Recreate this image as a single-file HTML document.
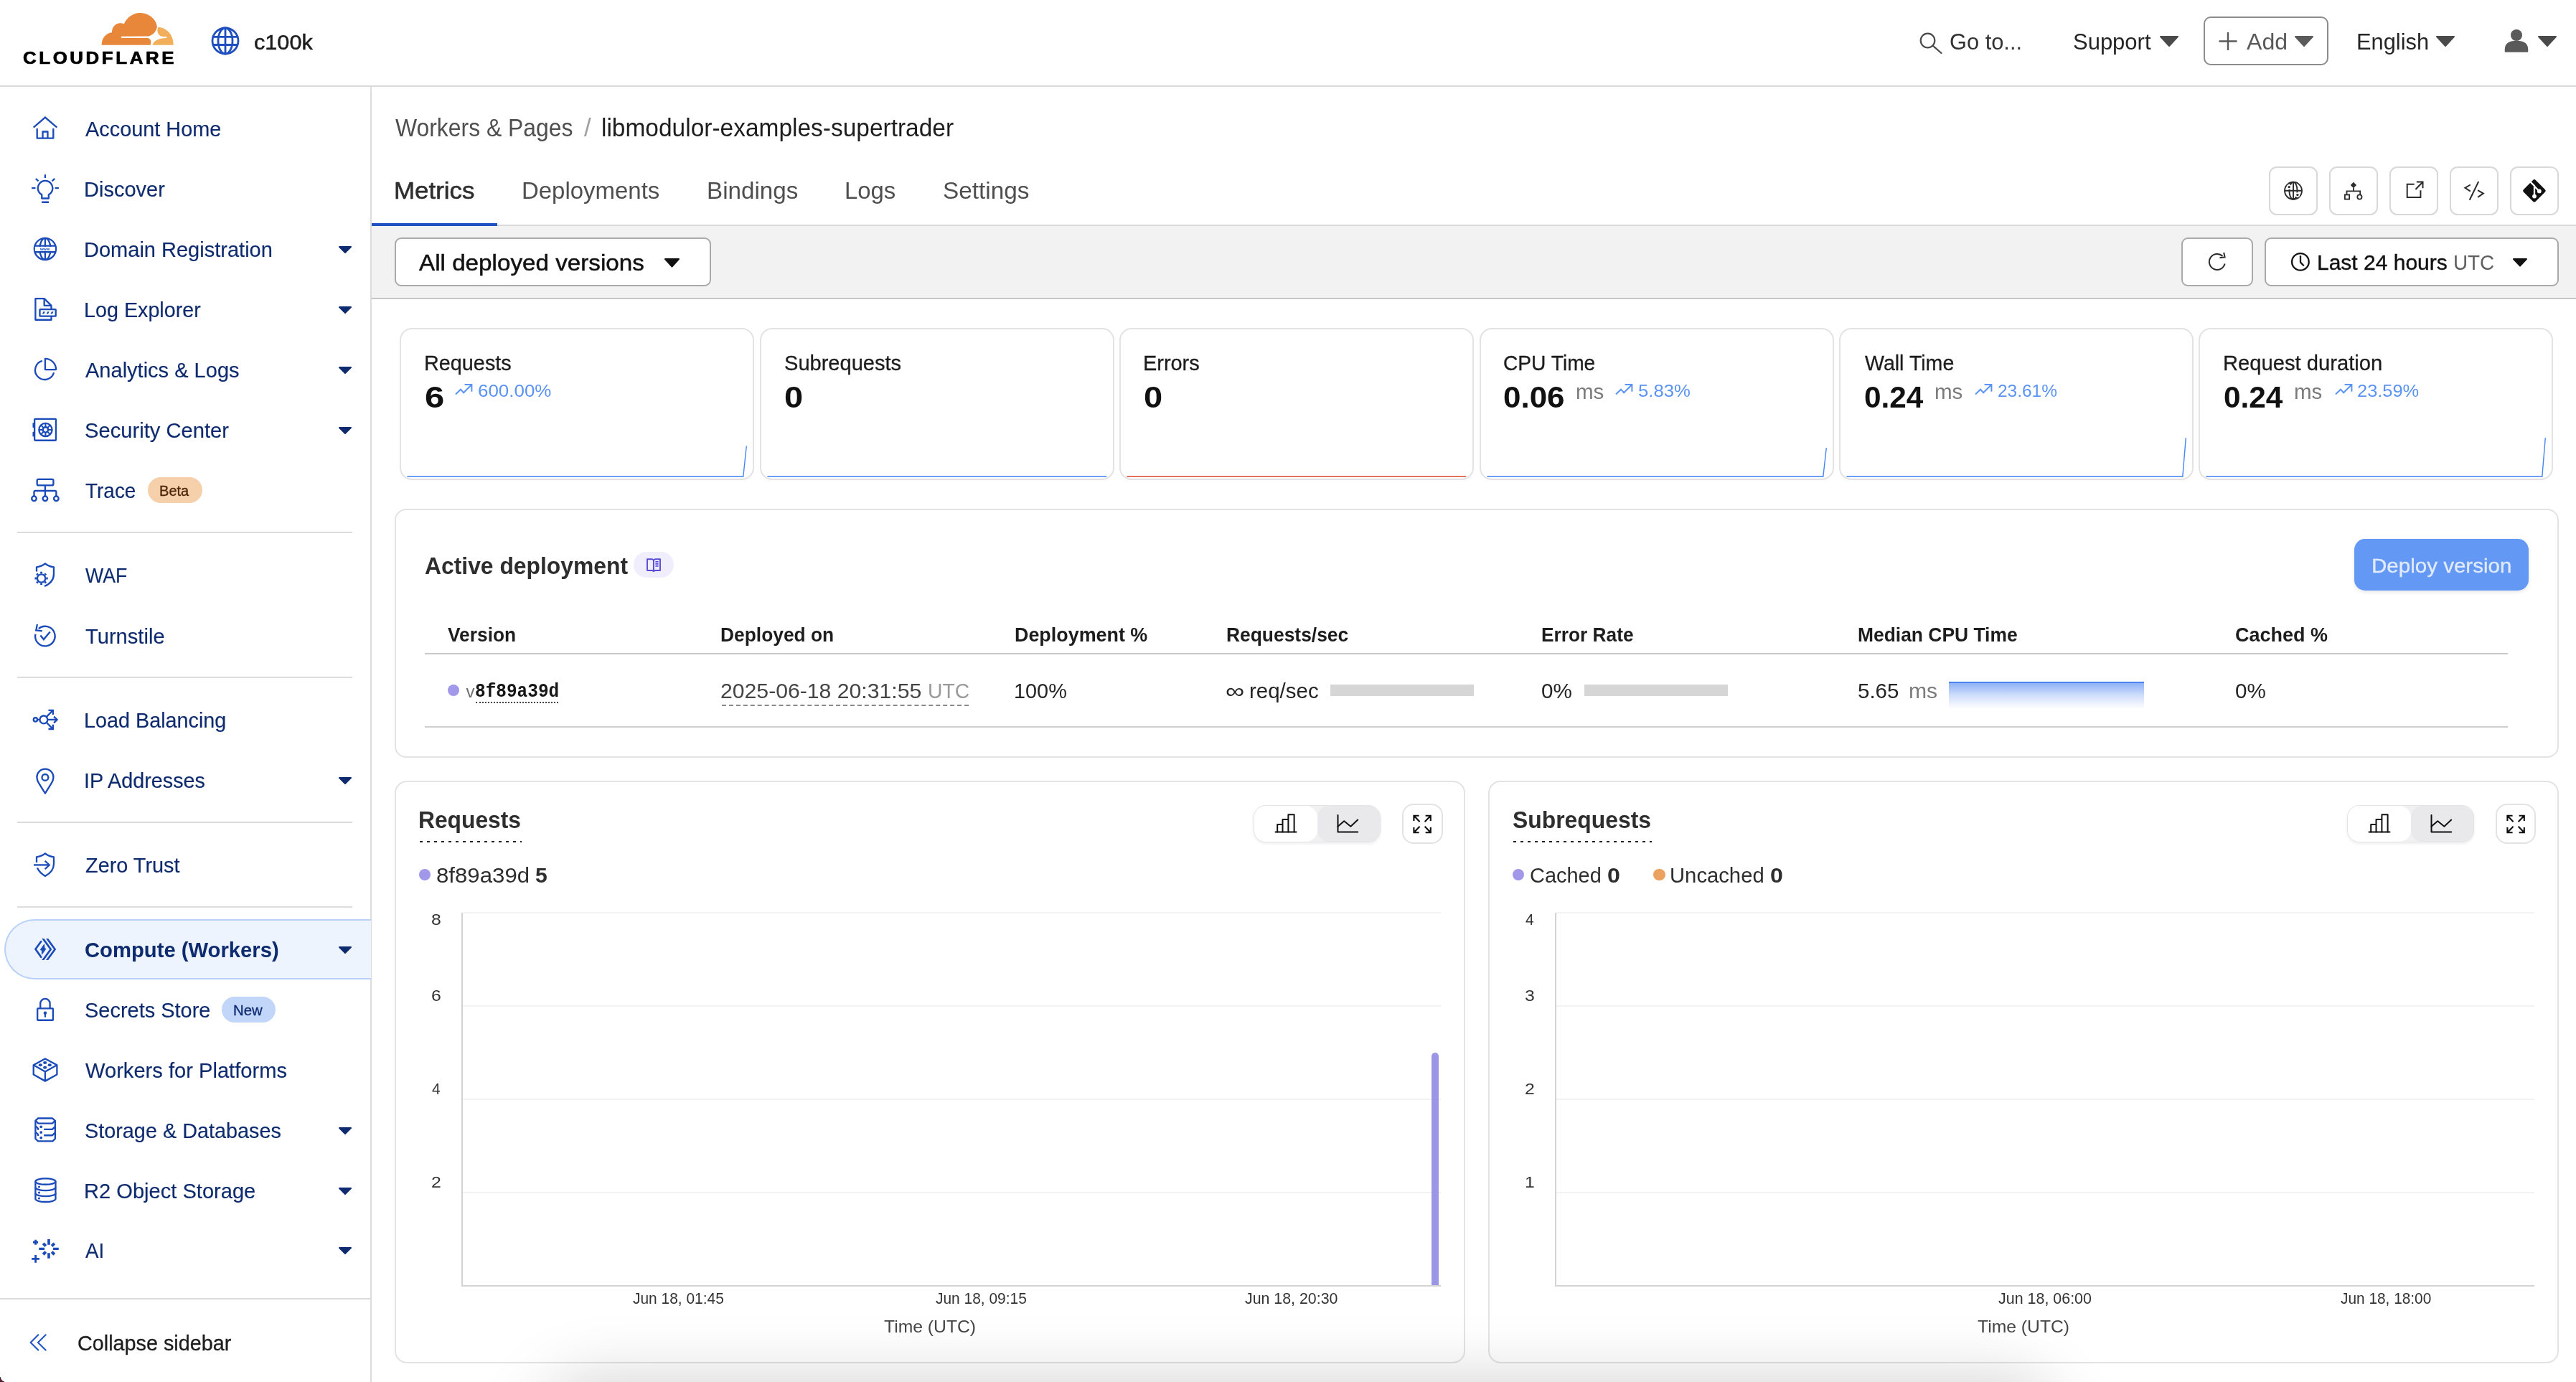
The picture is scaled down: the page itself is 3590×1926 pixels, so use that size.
<!DOCTYPE html>
<html><head><meta charset="utf-8"><title>Workers &amp; Pages</title><style>
html,body{margin:0;padding:0;background:#fff}
body{width:3590px;height:1926px;overflow:hidden;position:relative;font-family:"Liberation Sans",sans-serif}
#root{position:absolute;left:0;top:0;width:3590px;height:1926px;overflow:hidden;will-change:transform}
.a{position:absolute;display:block}
.t{position:absolute;display:block;white-space:pre;line-height:1;transform-origin:0 0;font-family:"Liberation Sans",sans-serif}
</style></head>
<body><div id="root">
<div class="a" style="left:0px;top:119px;width:3590px;height:2px;background:#dadada"></div>
<svg class="a" style="left:20px;top:5px" width="240" height="100" viewBox="0 0 2576 1073" ><path d="M1305,620 C1305,520 1370,440 1460,432 C1455,350 1520,292 1580,292 C1605,292 1625,298 1640,305 C1680,215 1770,140 1875,140 C2010,140 2120,230 2135,345 C2125,405 2085,465 2010,488 L1600,490 L1600,515 L1990,515 C2040,520 2055,570 2035,620 Z" fill="#e8863a"/><path d="M2150,355 C2270,355 2380,460 2380,620 L2065,620 C2085,555 2150,520 2275,515 L2285,495 L2200,490 C2150,475 2125,420 2150,355 Z" fill="#f2ae5a"/></svg>
<span class="t" id="t0" style="left:32.00px;top:70px;font-size:23px;color:#000;font-weight:700;-webkit-text-stroke:0.7px #000;letter-spacing:3.2px;transform:scaleX(1.1237);">CLOUDFLARE</span>
<svg class="a" style="left:284px;top:27px" width="60" height="60" viewBox="0 0 60 60" ><g fill="none" stroke="#1f4fbf" stroke-width="2.8"><circle cx="30" cy="30" r="18"/><ellipse cx="30" cy="30" rx="10" ry="18"/><path d="M30,12 V48 M13,24.4 H47 M13,35.5 H47"/></g></svg>
<span class="t" id="t1" style="left:353.96px;top:44px;font-size:29.5px;color:#1d1d1d;-webkit-text-stroke:0.5px #1d1d1d;transform:scaleX(1.0389);">c100k</span>
<svg class="a" style="left:2670px;top:40px" width="44" height="40" viewBox="0 0 44 40" ><g fill="none" stroke="#4a4a4a" stroke-width="2.2"><circle cx="16.5" cy="16.5" r="9.8"/><path d="M23.6,23.6 L35.5,34" stroke-linecap="round"/></g></svg>
<span class="t" id="t2" style="left:2716.99px;top:43px;font-size:30.5px;color:#333;transform:scaleX(1.0099);">Go to...</span>
<span class="t" id="t3" style="left:2888.98px;top:43px;font-size:30.5px;color:#252525;transform:scaleX(1.0155);">Support</span>
<svg class="a" style="left:3010px;top:49.5px" width="26" height="15" viewBox="0 0 26 15" ><path d="M1,1 H25 L13.0,14 Z" fill="#4a4a4a" stroke="#4a4a4a" stroke-width="2" stroke-linejoin="round"/></svg>
<div class="a" style="left:3070.6px;top:22.6px;width:174.6px;height:68.6px;border:2px solid #8c8c8c;border-radius:10px;box-sizing:border-box"></div>
<svg class="a" style="left:3090px;top:42px" width="30" height="30" viewBox="0 0 30 30" ><path d="M15,3 V28 M2.5,15.5 H27.5" stroke="#595959" stroke-width="2.4" fill="none"/></svg>
<span class="t" id="t4" style="left:3131.00px;top:43px;font-size:30.5px;color:#595959;transform:scaleX(1.0515);">Add</span>
<svg class="a" style="left:3198px;top:49.5px" width="26" height="15" viewBox="0 0 26 15" ><path d="M1,1 H25 L13.0,14 Z" fill="#5a5a5a" stroke="#5a5a5a" stroke-width="2" stroke-linejoin="round"/></svg>
<span class="t" id="t5" style="left:3283.98px;top:43px;font-size:30.5px;color:#252525;transform:scaleX(1.0098);">English</span>
<svg class="a" style="left:3395px;top:49.5px" width="26" height="15" viewBox="0 0 26 15" ><path d="M1,1 H25 L13.0,14 Z" fill="#4a4a4a" stroke="#4a4a4a" stroke-width="2" stroke-linejoin="round"/></svg>
<svg class="a" style="left:3488px;top:38px" width="38" height="38" viewBox="0 0 38 38" ><g fill="#5a5a5a"><circle cx="19" cy="11" r="8"/><path d="M3.5,34 V31 C3.5,23 10,19.5 19,19.5 C28,19.5 34.5,23 34.5,31 V34 Z" stroke="#5a5a5a" stroke-width="1.5" stroke-linejoin="round"/></g></svg>
<svg class="a" style="left:3537px;top:49.5px" width="26" height="15" viewBox="0 0 26 15" ><path d="M1,1 H25 L13.0,14 Z" fill="#4a4a4a" stroke="#4a4a4a" stroke-width="2" stroke-linejoin="round"/></svg>
<div class="a" style="left:516px;top:121px;width:2px;height:1805px;background:#dcdcdc"></div>
<div class="a" style="left:6px;top:1281px;width:511px;height:84px;background:#edf4fe;border:2px solid #b9d1f8;border-right:none;border-radius:42px 0 0 42px;box-sizing:border-box"></div>
<svg class="a" style="left:30px;top:150px" width="70" height="70" viewBox="0 0 1382 1382" fill="none" stroke="#1b4bb9" stroke-width="46"><polyline points="330,545 650,268 975,545"/><path d="M428,575 V840 H875 V575" stroke-linejoin="round"/><path d="M583,840 V662 H720 V840" stroke-linejoin="round"/></svg>
<svg class="a" style="left:30px;top:230px" width="70" height="70" viewBox="0 0 1382 1382" fill="none" stroke="#1b4bb9" stroke-width="46"><path d="M558,816 A203,203 0 1 1 747,816 V918 H558 Z" stroke-linejoin="round"/><path d="M555,1022 H750 M650,260 V355 M280,635 H385 M920,635 H1025 M390,375 L465,442 M912,372 L840,445"/></svg>
<svg class="a" style="left:30px;top:314px" width="70" height="70" viewBox="0 0 1382 1382" fill="none" stroke="#1b4bb9" stroke-width="46"><circle cx="650" cy="650" r="298"/><path d="M650,352 V948"/><ellipse cx="650" cy="650" rx="150" ry="298"/><rect x="372" y="588" width="556" height="124" fill="#fff" stroke="none"/><path d="M364,565 H936 M364,735 H936"/><text x="655" y="688" font-family="Liberation Sans" font-size="112" font-weight="700" text-anchor="middle" fill="#1b4bb9" stroke="none">www.</text></svg>
<svg class="a" style="left:30px;top:398px" width="70" height="70" viewBox="0 0 1382 1382" fill="none" stroke="#1b4bb9" stroke-width="46"><path d="M383,358 H625 L819,550 V942 H383 Z" stroke-linejoin="round"/><path d="M625,358 V550 H819" stroke-linejoin="round"/><rect x="503" y="653" width="439" height="189" rx="14" fill="#fff"/><path d="M600,715 H648 L618,782 H570 Z" fill="#1b4bb9" stroke="none"/><path d="M715,715 H763 L733,782 H685 Z" fill="#1b4bb9" stroke="none"/><path d="M830,715 H878 L848,782 H800 Z" fill="#1b4bb9" stroke="none"/></svg>
<svg class="a" style="left:30px;top:482px" width="70" height="70" viewBox="0 0 1382 1382" fill="none" stroke="#1b4bb9" stroke-width="46"><path d="M570,412 A262,262 0 1 0 890,735"/><path d="M650,352 V653 H948 A298,298 0 0 0 650,352 Z" stroke-linejoin="round"/></svg>
<svg class="a" style="left:30px;top:566px" width="70" height="70" viewBox="0 0 1382 1382" fill="none" stroke="#1b4bb9" stroke-width="46"><rect x="358" y="353" width="589" height="589" rx="18"/><path d="M325,480 V575 M325,725 V820" stroke-width="40" stroke-linecap="round"/><circle cx="660" cy="650" r="180"/><circle cx="660" cy="650" r="72"/><path d="M732.0,650.0 L840.0,650.0 M710.9,700.9 L787.3,777.3 M660.0,722.0 L660.0,830.0 M609.1,700.9 L532.7,777.3 M588.0,650.0 L480.0,650.0 M609.1,599.1 L532.7,522.7 M660.0,578.0 L660.0,470.0 M710.9,599.1 L787.3,522.7 " stroke-width="40"/></svg>
<svg class="a" style="left:30px;top:650px" width="70" height="70" viewBox="0 0 1382 1382" fill="none" stroke="#1b4bb9" stroke-width="46"><rect x="428" y="353" width="449" height="169" rx="38"/><path d="M650,522 V815"/><path d="M345,815 V708 Q345,672 381,672 H919 Q955,672 955,708 V815"/><circle cx="345" cy="885" r="65"/><circle cx="650" cy="885" r="65"/><circle cx="955" cy="885" r="65"/></svg>
<svg class="a" style="left:30px;top:768px" width="70" height="70" viewBox="0 0 1382 1382" fill="none" stroke="#1b4bb9" stroke-width="46"><path d="M415,565 V440 C505,428 590,392 650,345 C710,392 795,428 888,440 V630 C888,775 790,900 630,968" stroke-linejoin="round"/><circle cx="545" cy="750" r="112"/><path d="M677.0,750.0 L725.0,750.0 M638.3,843.3 L672.3,877.3 M545.0,882.0 L545.0,930.0 M451.7,843.3 L417.7,877.3 M413.0,750.0 L365.0,750.0 M451.7,656.7 L417.7,622.7 M545.0,618.0 L545.0,570.0 M638.3,656.7 L672.3,622.7 " stroke-width="58"/></svg>
<svg class="a" style="left:30px;top:852px" width="70" height="70" viewBox="0 0 1382 1382" fill="none" stroke="#1b4bb9" stroke-width="46"><path d="M383,625 A272,272 0 1 0 470,478"/><path d="M432,358 L400,522 L570,542"/><path d="M520,662 L610,772 L785,565"/></svg>
<svg class="a" style="left:30px;top:970px" width="70" height="70" viewBox="0 0 1382 1382" fill="none" stroke="#1b4bb9" stroke-width="46"><circle cx="383" cy="650" r="52"/><circle cx="610" cy="650" r="107"/><path d="M435,650 H503"/><path d="M717,650 H985"/><path d="M890,565 L978,650 L890,738"/><path d="M690,570 L860,395"/><path d="M740,392 H865 V515"/><path d="M690,730 L860,905"/><path d="M740,908 H865 V785"/></svg>
<svg class="a" style="left:30px;top:1054px" width="70" height="70" viewBox="0 0 1382 1382" fill="none" stroke="#1b4bb9" stroke-width="46"><path d="M650,1018 L478,745 C440,685 422,635 422,575 A228,228 0 0 1 878,575 C878,635 860,685 822,745 Z" stroke-linejoin="round"/><circle cx="650" cy="580" r="87"/></svg>
<svg class="a" style="left:30px;top:1172px" width="70" height="70" viewBox="0 0 1382 1382" fill="none" stroke="#1b4bb9" stroke-width="46"><path d="M415,590 V440 C505,428 590,392 650,345 C710,392 795,428 888,440 V630 C888,775 790,890 650,965 C560,915 480,840 432,742" stroke-linejoin="round"/><path d="M335,660 H770"/><path d="M645,548 L765,660 L645,775"/></svg>
<svg class="a" style="left:30px;top:1290px" width="70" height="70" viewBox="0 0 1382 1382" fill="none" stroke="#1b4bb9" stroke-width="52"><defs><clipPath id="cc"><rect x="0" y="353" width="1382" height="594"/></clipPath></defs><path d="M538,435 L385,645 L538,865" stroke-linecap="round"/><g clip-path="url(#cc)"><path d="M570,328 L805,650 L570,972"/><path d="M685,328 L920,650 L685,972"/></g><path d="M623,510 L517,664 L559,681 L561,794 L672,638 L636,621 Z" fill="#1b4bb9" stroke="#1b4bb9" stroke-width="14" stroke-linejoin="round"/></svg>
<svg class="a" style="left:30px;top:1374px" width="70" height="70" viewBox="0 0 1382 1382" fill="none" stroke="#1b4bb9" stroke-width="46"><rect x="438" y="618" width="429" height="324" rx="14"/><path d="M518,618 V485 A132,132 0 0 1 782,485 V618"/><circle cx="650" cy="745" r="45" fill="#1b4bb9" stroke="none"/><path d="M650,745 V862" stroke-width="42"/></svg>
<svg class="a" style="left:30px;top:1458px" width="70" height="70" viewBox="0 0 1382 1382" fill="none" stroke="#1b4bb9" stroke-width="46"><path d="M650,345 L975,520 V780 L650,960 L330,780 V520 Z M330,520 L650,700 L975,520 M650,700 V960" stroke-linejoin="round"/><ellipse cx="645" cy="455" rx="52" ry="40" fill="#1b4bb9" stroke="none"/><ellipse cx="520" cy="517" rx="52" ry="40" fill="#1b4bb9" stroke="none"/><ellipse cx="775" cy="517" rx="52" ry="40" fill="#1b4bb9" stroke="none"/><ellipse cx="645" cy="587" rx="52" ry="40" fill="#1b4bb9" stroke="none"/></svg>
<svg class="a" style="left:30px;top:1542px" width="70" height="70" viewBox="0 0 1382 1382" fill="none" stroke="#1b4bb9" stroke-width="46"><path d="M383,392 L455,325 H845 L925,392 V888 L855,955 H455 L383,888 Z" stroke-linejoin="round"/><path d="M395,400 L460,465 H845 L915,400"/><path d="M615,630 H845 L915,565 M615,795 H845 L915,730"/><path d="M395,545 L455,605 V645 M395,710 L455,770 V810"/><circle cx="537" cy="560" r="38" fill="#1b4bb9" stroke="none"/><circle cx="537" cy="712" r="38" fill="#1b4bb9" stroke="none"/><circle cx="537" cy="862" r="38" fill="#1b4bb9" stroke="none"/></svg>
<svg class="a" style="left:30px;top:1626px" width="70" height="70" viewBox="0 0 1382 1382" fill="none" stroke="#1b4bb9" stroke-width="46"><ellipse cx="660" cy="406" rx="277" ry="83"/><path d="M383,406 V885 A277,83 0 0 0 937,885 V406"/><path d="M383,570 A277,83 0 0 0 937,570 M383,730 A277,83 0 0 0 937,730"/><circle cx="483" cy="553" r="30" fill="#1b4bb9" stroke="none"/><circle cx="483" cy="713" r="30" fill="#1b4bb9" stroke="none"/><circle cx="483" cy="868" r="30" fill="#1b4bb9" stroke="none"/></svg>
<svg class="a" style="left:30px;top:1710px" width="70" height="70" viewBox="0 0 1382 1382" fill="none" stroke="#1b4bb9" stroke-width="46"><path d="M750,335 V490 M750,715 V865" stroke-width="72"/><path d="M480,600 H632 M870,600 H1022" stroke-width="62"/><path d="M595,450 L668,523 M905,450 L832,523 M595,755 L668,682 M905,755 L832,682" stroke-width="78"/><path d="M317,420 H457 M387,350 V490 M280,877 H492 M387,772 V982" stroke-width="56"/></svg>
<span class="t" id="t6" style="left:118.80px;top:165px;font-size:29.5px;color:#0d2b6e;-webkit-text-stroke:0.15px #0d2b6e;transform:scaleX(0.9789);">Account Home</span>
<span class="t" id="t7" style="left:116.83px;top:249px;font-size:29.5px;color:#0d2b6e;-webkit-text-stroke:0.15px #0d2b6e;transform:scaleX(0.9830);">Discover</span>
<span class="t" id="t8" style="left:116.83px;top:333px;font-size:29.5px;color:#0d2b6e;-webkit-text-stroke:0.15px #0d2b6e;transform:scaleX(0.9835);">Domain Registration</span>
<svg class="a" style="left:471.5px;top:343px" width="18" height="10" viewBox="0 0 18 10" ><path d="M1,1 H17 L9.0,9 Z" fill="#0d2b6e" stroke="#0d2b6e" stroke-width="2" stroke-linejoin="round"/></svg>
<span class="t" id="t9" style="left:116.85px;top:417px;font-size:29.5px;color:#0d2b6e;-webkit-text-stroke:0.15px #0d2b6e;transform:scaleX(0.9732);">Log Explorer</span>
<svg class="a" style="left:471.5px;top:427px" width="18" height="10" viewBox="0 0 18 10" ><path d="M1,1 H17 L9.0,9 Z" fill="#0d2b6e" stroke="#0d2b6e" stroke-width="2" stroke-linejoin="round"/></svg>
<span class="t" id="t10" style="left:118.80px;top:501px;font-size:29.5px;color:#0d2b6e;-webkit-text-stroke:0.15px #0d2b6e;transform:scaleX(0.9838);">Analytics &amp; Logs</span>
<svg class="a" style="left:471.5px;top:511px" width="18" height="10" viewBox="0 0 18 10" ><path d="M1,1 H17 L9.0,9 Z" fill="#0d2b6e" stroke="#0d2b6e" stroke-width="2" stroke-linejoin="round"/></svg>
<span class="t" id="t11" style="left:117.81px;top:585px;font-size:29.5px;color:#0d2b6e;-webkit-text-stroke:0.15px #0d2b6e;transform:scaleX(0.9883);">Security Center</span>
<svg class="a" style="left:471.5px;top:595px" width="18" height="10" viewBox="0 0 18 10" ><path d="M1,1 H17 L9.0,9 Z" fill="#0d2b6e" stroke="#0d2b6e" stroke-width="2" stroke-linejoin="round"/></svg>
<span class="t" id="t12" style="left:118.79px;top:669px;font-size:29.5px;color:#0d2b6e;-webkit-text-stroke:0.15px #0d2b6e;transform:scaleX(0.9474);">Trace</span>
<span class="t" id="t13" style="left:118.80px;top:787px;font-size:29.5px;color:#0d2b6e;-webkit-text-stroke:0.15px #0d2b6e;transform:scaleX(0.9067);">WAF</span>
<span class="t" id="t14" style="left:118.80px;top:872px;font-size:29.5px;color:#0d2b6e;-webkit-text-stroke:0.15px #0d2b6e;transform:scaleX(0.9873);">Turnstile</span>
<span class="t" id="t15" style="left:116.85px;top:989px;font-size:29.5px;color:#0d2b6e;-webkit-text-stroke:0.15px #0d2b6e;transform:scaleX(0.9751);">Load Balancing</span>
<span class="t" id="t16" style="left:116.84px;top:1073px;font-size:29.5px;color:#0d2b6e;-webkit-text-stroke:0.15px #0d2b6e;transform:scaleX(0.9752);">IP Addresses</span>
<svg class="a" style="left:471.5px;top:1083px" width="18" height="10" viewBox="0 0 18 10" ><path d="M1,1 H17 L9.0,9 Z" fill="#0d2b6e" stroke="#0d2b6e" stroke-width="2" stroke-linejoin="round"/></svg>
<span class="t" id="t17" style="left:118.80px;top:1191px;font-size:29.5px;color:#0d2b6e;-webkit-text-stroke:0.15px #0d2b6e;transform:scaleX(0.9781);">Zero Trust</span>
<span class="t" id="t18" style="left:117.81px;top:1309px;font-size:29.5px;color:#0d2b6e;font-weight:700;transform:scaleX(0.9909);">Compute (Workers)</span>
<svg class="a" style="left:471.5px;top:1319px" width="18" height="10" viewBox="0 0 18 10" ><path d="M1,1 H17 L9.0,9 Z" fill="#0d2b6e" stroke="#0d2b6e" stroke-width="2" stroke-linejoin="round"/></svg>
<span class="t" id="t19" style="left:117.81px;top:1393px;font-size:29.5px;color:#0d2b6e;-webkit-text-stroke:0.15px #0d2b6e;transform:scaleX(0.9814);">Secrets Store</span>
<span class="t" id="t20" style="left:118.80px;top:1477px;font-size:29.5px;color:#0d2b6e;-webkit-text-stroke:0.15px #0d2b6e;transform:scaleX(0.9869);">Workers for Platforms</span>
<span class="t" id="t21" style="left:117.82px;top:1561px;font-size:29.5px;color:#0d2b6e;-webkit-text-stroke:0.15px #0d2b6e;transform:scaleX(0.9768);">Storage &amp; Databases</span>
<svg class="a" style="left:471.5px;top:1571px" width="18" height="10" viewBox="0 0 18 10" ><path d="M1,1 H17 L9.0,9 Z" fill="#0d2b6e" stroke="#0d2b6e" stroke-width="2" stroke-linejoin="round"/></svg>
<span class="t" id="t22" style="left:116.83px;top:1645px;font-size:29.5px;color:#0d2b6e;-webkit-text-stroke:0.15px #0d2b6e;transform:scaleX(0.9860);">R2 Object Storage</span>
<svg class="a" style="left:471.5px;top:1655px" width="18" height="10" viewBox="0 0 18 10" ><path d="M1,1 H17 L9.0,9 Z" fill="#0d2b6e" stroke="#0d2b6e" stroke-width="2" stroke-linejoin="round"/></svg>
<span class="t" id="t23" style="left:118.82px;top:1728px;font-size:29.5px;color:#0d2b6e;-webkit-text-stroke:0.15px #0d2b6e;transform:scaleX(0.9392);">AI</span>
<svg class="a" style="left:471.5px;top:1738px" width="18" height="10" viewBox="0 0 18 10" ><path d="M1,1 H17 L9.0,9 Z" fill="#0d2b6e" stroke="#0d2b6e" stroke-width="2" stroke-linejoin="round"/></svg>
<div class="a" style="left:24px;top:741px;width:467px;height:2px;background:#dcdcdc"></div>
<div class="a" style="left:24px;top:943px;width:467px;height:2px;background:#dcdcdc"></div>
<div class="a" style="left:24px;top:1145px;width:467px;height:2px;background:#dcdcdc"></div>
<div class="a" style="left:24px;top:1263px;width:467px;height:2px;background:#dcdcdc"></div>
<div class="a" style="left:0px;top:1809px;width:516px;height:2px;background:#dcdcdc"></div>
<div class="a" style="left:206px;top:664.8px;width:76px;height:36.2px;background:#f6cfab;border-radius:18.1px"></div>
<span class="t" id="t24" style="left:222.17px;top:675px;font-size:19.5px;color:#4a2508;-webkit-text-stroke:0.3px #4a2508;transform:scaleX(1.0289);">Beta</span>
<div class="a" style="left:309px;top:1388.8px;width:74.5px;height:36px;background:#c2d6fa;border-radius:18px"></div>
<span class="t" id="t25" style="left:324.96px;top:1399px;font-size:19.5px;color:#0d2b6e;-webkit-text-stroke:0.3px #0d2b6e;transform:scaleX(1.0406);">New</span>
<svg class="a" style="left:36px;top:1852px" width="36" height="38" viewBox="0 0 36 38" ><path d="M17.3,8.3 L6.6,18.9 L17.3,29.6 M27.7,8.3 L16.9,18.9 L27.7,29.6" fill="none" stroke="#2456c8" stroke-width="2.1" stroke-linecap="round" stroke-linejoin="round"/></svg>
<span class="t" id="t26" style="left:108.02px;top:1857px;font-size:29.5px;color:#1d1d1d;-webkit-text-stroke:0.3px #1d1d1d;transform:scaleX(0.9753);">Collapse sidebar</span>
<span class="t" id="t27" style="left:551.00px;top:160px;font-size:35px;color:#4f4f4f;transform:scaleX(0.9108);">Workers &amp; Pages</span>
<span class="t" id="t28" style="left:814.00px;top:160px;font-size:35px;color:#a0a0a0;">/</span>
<span class="t" id="t29" style="left:838.09px;top:160px;font-size:35px;color:#1d1d1d;transform:scaleX(0.9563);">libmodulor-examples-supertrader</span>
<span class="t" id="t30" style="left:548.85px;top:250px;font-size:32.5px;color:#2e2e2e;-webkit-text-stroke:0.6px #2e2e2e;transform:scaleX(1.0735);">Metrics</span>
<span class="t" id="t31" style="left:726.97px;top:250px;font-size:32.5px;color:#4f4f4f;transform:scaleX(1.0138);">Deployments</span>
<span class="t" id="t32" style="left:984.95px;top:250px;font-size:32.5px;color:#4f4f4f;transform:scaleX(1.0211);">Bindings</span>
<span class="t" id="t33" style="left:1176.98px;top:250px;font-size:32.5px;color:#4f4f4f;transform:scaleX(1.0116);">Logs</span>
<span class="t" id="t34" style="left:1313.78px;top:250px;font-size:32.5px;color:#4f4f4f;transform:scaleX(1.0261);">Settings</span>
<div class="a" style="left:518px;top:313px;width:3072px;height:2px;background:#d8d8d8"></div>
<div class="a" style="left:518px;top:311px;width:175px;height:4px;background:#2150c2"></div>
<div class="a" style="left:518px;top:315px;width:3072px;height:100px;background:#f2f2f2"></div>
<div class="a" style="left:518px;top:415px;width:3072px;height:2px;background:#c6c6c6"></div>
<div class="a" style="left:549.8px;top:330.8px;width:441px;height:68.4px;background:#fff;border:2px solid #a9a9a9;border-radius:9px;box-sizing:border-box"></div>
<span class="t" id="t35" style="left:584.40px;top:350px;font-size:32px;color:#111;-webkit-text-stroke:0.5px #111;transform:scaleX(1.0379);">All deployed versions</span>
<svg class="a" style="left:925.6px;top:360px" width="21" height="12.5" viewBox="0 0 21 12.5" ><path d="M1,1 H20 L10.5,11.5 Z" fill="#111" stroke="#111" stroke-width="2" stroke-linejoin="round"/></svg>
<div class="a" style="left:3039.8px;top:330.8px;width:100.2px;height:68.4px;background:#fff;border:2px solid #a9a9a9;border-radius:9px;box-sizing:border-box"></div>
<svg class="a" style="left:3070px;top:345px" width="40" height="40" viewBox="0 0 40 40" ><g fill="none" stroke="#2b2b2b" stroke-width="2"><path d="M30.6,22.5 A11,11 0 1 1 27.5,12"/><path d="M29.2,7 L30.6,13.4 L23.4,14.3" stroke-linejoin="miter"/></g></svg>
<div class="a" style="left:3155.8px;top:330.8px;width:410.2px;height:68.4px;background:#fff;border:2px solid #a9a9a9;border-radius:9px;box-sizing:border-box"></div>
<svg class="a" style="left:3190px;top:349px" width="32" height="32" viewBox="0 0 32 32" ><g fill="none" stroke="#111" stroke-width="2.3"><circle cx="15.9" cy="15.9" r="11.8"/><path d="M16,7.2 V16.6 L20.8,21.5"/></g></svg>
<span class="t" id="t36" style="left:3229.47px;top:351px;font-size:29.5px;color:#111;-webkit-text-stroke:0.4px #111;transform:scaleX(1.0170);">Last 24 hours</span>
<span class="t" id="t37" style="left:3419.11px;top:351px;font-size:29.5px;color:#5f5f5f;transform:scaleX(0.9434);">UTC</span>
<svg class="a" style="left:3502px;top:360px" width="20" height="11.5" viewBox="0 0 20 11.5" ><path d="M1,1 H19 L10.0,10.5 Z" fill="#111" stroke="#111" stroke-width="2" stroke-linejoin="round"/></svg>
<div class="a" style="left:3161.9px;top:232px;width:67.9px;height:67.9px;background:#fff;border:2px solid #d8d8d8;border-radius:11px;box-sizing:border-box"></div>
<div class="a" style="left:3245.9px;top:232px;width:67.9px;height:67.9px;background:#fff;border:2px solid #d8d8d8;border-radius:11px;box-sizing:border-box"></div>
<div class="a" style="left:3329.9px;top:232px;width:67.9px;height:67.9px;background:#fff;border:2px solid #d8d8d8;border-radius:11px;box-sizing:border-box"></div>
<div class="a" style="left:3413.9px;top:232px;width:67.9px;height:67.9px;background:#fff;border:2px solid #d8d8d8;border-radius:11px;box-sizing:border-box"></div>
<div class="a" style="left:3497.9px;top:232px;width:67.9px;height:67.9px;background:#fff;border:2px solid #d8d8d8;border-radius:11px;box-sizing:border-box"></div>
<svg class="a" style="left:3176px;top:246px" width="40" height="40" viewBox="0 0 40 40" ><g fill="none" stroke="#2b2b2b" stroke-width="1.9"><circle cx="20" cy="19.8" r="12"/><ellipse cx="20" cy="19.8" rx="5.6" ry="12"/><path d="M20,7.8 V31.8 M8,19.8 H32"/></g><circle cx="14.2" cy="14.6" r="3.3" fill="#fff"/><circle cx="25.9" cy="25.6" r="3.3" fill="#fff"/><circle cx="14.2" cy="14.6" r="1.7" fill="#2b2b2b"/><circle cx="25.9" cy="25.6" r="1.7" fill="#2b2b2b"/><circle cx="24.4" cy="30.2" r="1.1" fill="#2b2b2b"/><circle cx="15.2" cy="9.6" r="1.1" fill="#2b2b2b"/></svg>
<svg class="a" style="left:3260px;top:246px" width="40" height="40" viewBox="0 0 40 40" ><g fill="none" stroke="#2b2b2b" stroke-width="1.8"><path d="M19.9,16 V20.3 M10.5,25 V20.3 H29.2 V25"/><rect x="7.9" y="25.4" width="6.2" height="6.2"/><circle cx="28.4" cy="28.5" r="3.1"/></g><path d="M19.9,7.8 L24,12 L19.9,16.2 L15.8,12 Z" fill="#2b2b2b"/></svg>
<svg class="a" style="left:3344px;top:246px" width="40" height="40" viewBox="0 0 40 40" ><g fill="none" stroke="#2b2b2b" stroke-width="2"><path d="M20.6,10.8 H10.7 V29 H29.4 V19.2"/><path d="M22.4,18 L32.5,7.5 M23.8,7.5 H32.5 V16.3"/></g></svg>
<svg class="a" style="left:3428px;top:246px" width="40" height="40" viewBox="0 0 40 40" ><g fill="none" stroke="#2b2b2b" stroke-width="2"><path d="M26.2,7 L13.7,32.8"/><path d="M14.8,11.5 L7.4,15.9 L14.8,20.7"/><path d="M25.1,19.2 L32.8,23.6 L25.1,28.8"/></g></svg>
<svg class="a" style="left:3512px;top:246px" width="40" height="40" viewBox="0 0 40 40" ><rect x="8.1" y="8" width="23.6" height="23.6" rx="2.6" transform="rotate(45 19.9 19.8)" fill="#111"/><g stroke="#fff" stroke-width="2.3" fill="none"><path d="M14.6,7.6 L20,13 V27.5 M20,13.5 L26.6,20.2"/></g><circle cx="20" cy="27.6" r="2.9" fill="#fff"/><circle cx="26.8" cy="20.4" r="2.9" fill="#fff"/></svg>
<div class="a" style="left:557.4px;top:457px;width:494px;height:212px;background:#fff;border:2px solid #e3e3e3;border-radius:17px;box-sizing:border-box"></div>
<span class="t" id="t38" style="left:590.85px;top:491px;font-size:29.5px;color:#1d1d1d;-webkit-text-stroke:0.3px #1d1d1d;transform:scaleX(0.9764);">Requests</span>
<span class="t" id="t39" style="left:591.62px;top:533px;font-size:42px;color:#111;font-weight:700;transform:scaleX(1.1672);">6</span>
<svg class="a" style="left:633.6px;top:534px" width="28" height="20" viewBox="0 0 28 20" ><path d="M1,15.5 L8,8.7 L12.1,13.2 L23.4,2 M13.6,2 H23.4 V11.8" fill="none" stroke="#5b93f4" stroke-width="2"/></svg>
<span class="t" id="t40" style="left:665.52px;top:533px;font-size:24px;color:#5b93f4;transform:scaleX(1.0813);">600.00%</span>
<svg class="a" style="left:558.4px;top:458px" width="492" height="210" viewBox="0 0 492 210" ><path d="M9.4,206.2 H477.8 L482.3,163.5 " fill="none" stroke="#4285f4" stroke-width="1.4"/></svg>
<div class="a" style="left:1058.8px;top:457px;width:494px;height:212px;background:#fff;border:2px solid #e3e3e3;border-radius:17px;box-sizing:border-box"></div>
<span class="t" id="t41" style="left:1093.01px;top:491px;font-size:29.5px;color:#1d1d1d;-webkit-text-stroke:0.3px #1d1d1d;transform:scaleX(0.9849);">Subrequests</span>
<span class="t" id="t42" style="left:1092.88px;top:533px;font-size:42px;color:#111;font-weight:700;transform:scaleX(1.1195);">0</span>
<svg class="a" style="left:1059.8px;top:458px" width="492" height="210" viewBox="0 0 492 210" ><path d="M9.4,206.2 H482.3" fill="none" stroke="#4285f4" stroke-width="1.4"/></svg>
<div class="a" style="left:1560.1999999999998px;top:457px;width:494px;height:212px;background:#fff;border:2px solid #e3e3e3;border-radius:17px;box-sizing:border-box"></div>
<span class="t" id="t43" style="left:1593.24px;top:491px;font-size:29.5px;color:#1d1d1d;-webkit-text-stroke:0.3px #1d1d1d;transform:scaleX(0.9800);">Errors</span>
<span class="t" id="t44" style="left:1594.07px;top:533px;font-size:42px;color:#111;font-weight:700;transform:scaleX(1.1195);">0</span>
<svg class="a" style="left:1561.1999999999998px;top:458px" width="492" height="210" viewBox="0 0 492 210" ><path d="M9.4,206.2 H482.3" fill="none" stroke="#de4a30" stroke-width="1.4"/></svg>
<div class="a" style="left:2061.6px;top:457px;width:494px;height:212px;background:#fff;border:2px solid #e3e3e3;border-radius:17px;box-sizing:border-box"></div>
<span class="t" id="t45" style="left:2095.44px;top:491px;font-size:29.5px;color:#1d1d1d;-webkit-text-stroke:0.3px #1d1d1d;transform:scaleX(0.9541);">CPU Time</span>
<span class="t" id="t46" style="left:2095.35px;top:533px;font-size:42px;color:#111;font-weight:700;transform:scaleX(1.0468);">0.06</span>
<span class="t" id="t47" style="left:2195.77px;top:531px;font-size:29.5px;color:#7b7b7b;transform:scaleX(1.0016);">ms</span>
<svg class="a" style="left:2251.3999999999996px;top:534px" width="28" height="20" viewBox="0 0 28 20" ><path d="M1,15.5 L8,8.7 L12.1,13.2 L23.4,2 M13.6,2 H23.4 V11.8" fill="none" stroke="#5b93f4" stroke-width="2"/></svg>
<span class="t" id="t48" style="left:2282.97px;top:533px;font-size:24px;color:#5b93f4;transform:scaleX(1.0699);">5.83%</span>
<svg class="a" style="left:2062.6px;top:458px" width="492" height="210" viewBox="0 0 492 210" ><path d="M9.4,206.2 H477.8 L482.3,166.2 " fill="none" stroke="#4285f4" stroke-width="1.4"/></svg>
<div class="a" style="left:2563.0px;top:457px;width:494px;height:212px;background:#fff;border:2px solid #e3e3e3;border-radius:17px;box-sizing:border-box"></div>
<span class="t" id="t49" style="left:2598.60px;top:491px;font-size:29.5px;color:#1d1d1d;-webkit-text-stroke:0.3px #1d1d1d;transform:scaleX(0.9680);">Wall Time</span>
<span class="t" id="t50" style="left:2597.59px;top:533px;font-size:42px;color:#111;font-weight:700;transform:scaleX(1.0077);">0.24</span>
<span class="t" id="t51" style="left:2695.98px;top:531px;font-size:29.5px;color:#7b7b7b;transform:scaleX(1.0016);">ms</span>
<svg class="a" style="left:2752.0px;top:534px" width="28" height="20" viewBox="0 0 28 20" ><path d="M1,15.5 L8,8.7 L12.1,13.2 L23.4,2 M13.6,2 H23.4 V11.8" fill="none" stroke="#5b93f4" stroke-width="2"/></svg>
<span class="t" id="t52" style="left:2783.79px;top:533px;font-size:24px;color:#5b93f4;transform:scaleX(1.0193);">23.61%</span>
<svg class="a" style="left:2564.0px;top:458px" width="492" height="210" viewBox="0 0 492 210" ><path d="M9.4,206.2 H477.8 L482.3,152.2 " fill="none" stroke="#4285f4" stroke-width="1.4"/></svg>
<div class="a" style="left:3064.4px;top:457px;width:494px;height:212px;background:#fff;border:2px solid #e3e3e3;border-radius:17px;box-sizing:border-box"></div>
<span class="t" id="t53" style="left:3097.82px;top:491px;font-size:29.5px;color:#1d1d1d;-webkit-text-stroke:0.3px #1d1d1d;transform:scaleX(0.9888);">Request duration</span>
<span class="t" id="t54" style="left:3098.78px;top:533px;font-size:42px;color:#111;font-weight:700;transform:scaleX(1.0077);">0.24</span>
<span class="t" id="t55" style="left:3196.69px;top:531px;font-size:29.5px;color:#7b7b7b;transform:scaleX(1.0016);">ms</span>
<svg class="a" style="left:3253.8px;top:534px" width="28" height="20" viewBox="0 0 28 20" ><path d="M1,15.5 L8,8.7 L12.1,13.2 L23.4,2 M13.6,2 H23.4 V11.8" fill="none" stroke="#5b93f4" stroke-width="2"/></svg>
<span class="t" id="t56" style="left:3285.15px;top:533px;font-size:24px;color:#5b93f4;transform:scaleX(1.0592);">23.59%</span>
<svg class="a" style="left:3065.4px;top:458px" width="492" height="210" viewBox="0 0 492 210" ><path d="M9.4,206.2 H477.8 L482.3,152.2 " fill="none" stroke="#4285f4" stroke-width="1.4"/></svg>
<div class="a" style="left:550px;top:708.6px;width:3016.2px;height:347.3px;background:#fff;border:2px solid #e3e3e3;border-radius:16px;box-sizing:border-box"></div>
<span class="t" id="t57" style="left:591.79px;top:772px;font-size:33px;color:#2d2d2d;font-weight:700;transform:scaleX(0.9645);">Active deployment</span>
<div class="a" style="left:883.2px;top:769px;width:55.7px;height:36.2px;background:#f0eefc;border-radius:18.1px"></div>
<svg class="a" style="left:896px;top:774px" width="30" height="27" viewBox="0 0 30 27" ><g fill="none" stroke="#574bd6" stroke-width="1.9" stroke-linejoin="round"><path d="M14.9,6.5 L13,5.2 H6 V21 H13 L14.9,22.3 L16.8,21 H24 V5.2 H16.8 Z M14.9,6.5 V22"/><path d="M17.4,8.8 H21.6 M17.4,11.8 H21.6 M17.4,14.8 H21.6" stroke-width="1.7"/></g></svg>
<div class="a" style="left:3281px;top:751px;width:243px;height:72px;background:#6399f5;border-radius:15px;box-shadow:0 2px 5px rgba(0,0,0,.10)"></div>
<span class="t" id="t58" style="left:3305.02px;top:774px;font-size:28.5px;color:#e1ebfd;-webkit-text-stroke:0.3px #e1ebfd;transform:scaleX(1.0365);">Deploy version</span>
<span class="t" id="t59" style="left:624.40px;top:870px;font-size:28.5px;color:#1d1d1d;font-weight:700;transform:scaleX(0.9237);">Version</span>
<span class="t" id="t60" style="left:1004.47px;top:870px;font-size:28.5px;color:#1d1d1d;font-weight:700;transform:scaleX(0.9252);">Deployed on</span>
<span class="t" id="t61" style="left:1414.46px;top:870px;font-size:28.5px;color:#1d1d1d;font-weight:700;transform:scaleX(0.9435);">Deployment %</span>
<span class="t" id="t62" style="left:1708.78px;top:870px;font-size:28.5px;color:#1d1d1d;font-weight:700;transform:scaleX(0.9262);">Requests/sec</span>
<span class="t" id="t63" style="left:2147.97px;top:870px;font-size:28.5px;color:#1d1d1d;font-weight:700;transform:scaleX(0.9220);">Error Rate</span>
<span class="t" id="t64" style="left:2589.17px;top:870px;font-size:28.5px;color:#1d1d1d;font-weight:700;transform:scaleX(0.9269);">Median CPU Time</span>
<span class="t" id="t65" style="left:3115.46px;top:870px;font-size:28.5px;color:#1d1d1d;font-weight:700;transform:scaleX(0.9461);">Cached %</span>
<div class="a" style="left:592px;top:910.4px;width:2903px;height:2px;background:#c9c9c9"></div>
<div class="a" style="left:592px;top:1011.6px;width:2903px;height:2px;background:#cdcdcd"></div>
<div class="a" style="left:623.8px;top:953.6px;width:16.2px;height:16.2px;background:#a198ea;border-radius:50%"></div>
<span class="t" id="t66" style="left:649.50px;top:952px;font-size:24px;color:#6f6f6f;">v</span>
<span class="t" id="t67" style="left:661.61px;top:950px;font-size:27.5px;color:#161616;font-weight:700;font-family:'Liberation Mono',monospace;transform:scaleX(0.8879);">8f89a39d</span>
<div class="a" style="left:662.5px;top:978px;width:115px;height:0px;border-top:2px dotted #444"></div>
<span class="t" id="t68" style="left:1004.38px;top:948px;font-size:29.5px;color:#454545;transform:scaleX(1.0230);">2025-06-18 20:31:55</span>
<span class="t" id="t69" style="left:1292.87px;top:948px;font-size:29.5px;color:#9a9a9a;transform:scaleX(0.9605);">UTC</span>
<div class="a" style="left:1005.8px;top:982px;width:344px;height:0px;border-top:2px dashed #8a8a8a"></div>
<span class="t" id="t70" style="left:1413.44px;top:948px;font-size:29.5px;color:#252525;transform:scaleX(0.9778);">100%</span>
<span class="t" id="t71" style="left:1708.46px;top:948px;font-size:30px;color:#252525;transform:scaleX(1.2266);">&#8734;</span>
<span class="t" id="t72" style="left:1740.69px;top:948px;font-size:29.5px;color:#252525;transform:scaleX(0.9991);">req/sec</span>
<div class="a" style="left:1853.9px;top:954.4px;width:200.3px;height:15.6px;background:#d6d6d6"></div>
<span class="t" id="t73" style="left:2147.89px;top:948px;font-size:29.5px;color:#252525;transform:scaleX(1.0048);">0%</span>
<div class="a" style="left:2207.9px;top:954.4px;width:200px;height:15.6px;background:#d6d6d6"></div>
<span class="t" id="t74" style="left:2589.10px;top:948px;font-size:29.5px;color:#252525;transform:scaleX(0.9981);">5.65</span>
<span class="t" id="t75" style="left:2659.96px;top:948px;font-size:29.5px;color:#7b7b7b;transform:scaleX(1.0224);">ms</span>
<div class="a" style="left:2716px;top:949.6px;width:272px;height:38px;background:linear-gradient(#8fb2f7,#d3e0fb 50%,#fff);border-top:2px solid #4a84f0;box-sizing:border-box"></div>
<span class="t" id="t76" style="left:3115.38px;top:948px;font-size:29.5px;color:#252525;transform:scaleX(1.0048);">0%</span>
<div class="a" style="left:549.9px;top:1087.7px;width:1492.2px;height:812.1px;background:#fff;border:2px solid #e3e3e3;border-radius:17px;box-sizing:border-box"></div>
<span class="t" id="t77" style="left:583.05px;top:1127px;font-size:32.5px;color:#2e2e2e;font-weight:700;transform:scaleX(0.9775);">Requests</span>
<div class="a" style="left:585.0px;top:1171.7px;width:142px;height:2px;background:repeating-linear-gradient(90deg,#222 0 4px,transparent 4px 10px)"></div>
<div class="a" style="left:1746.9px;top:1122px;width:177px;height:51.5px;background:#f1f1f2;border:1px solid #e4e4e6;border-radius:17px;box-sizing:border-box;box-shadow:0 2px 4px rgba(0,0,0,.07)"></div>
<div class="a" style="left:1835.9px;top:1123px;width:87px;height:49.5px;background:#e9e9eb;border-radius:16px"></div>
<div class="a" style="left:1747.9px;top:1123px;width:88px;height:49.5px;background:#fff;border-radius:16px"></div>
<svg class="a" style="left:1772.9px;top:1130px" width="40" height="36" viewBox="0 0 40 36" ><g fill="none" stroke="#111" stroke-width="2" stroke-linecap="round" stroke-linejoin="round"><path d="M4.5,29.5 H33.5"/><path d="M7.2,29.5 V18.9 H14.5 V29.5 M14.5,18.9 V12 H22.4 V29.5 M22.4,12 V5.2 H30.6 V29.5"/></g></svg>
<svg class="a" style="left:1858.9px;top:1130px" width="40" height="36" viewBox="0 0 40 36" ><g fill="none" stroke="#111" stroke-width="2" stroke-linecap="round" stroke-linejoin="round"><path d="M5.5,6 V29.5 H33.2"/><path d="M5.5,21.8 L14.2,14.2 L23.4,21.8 L33.2,12.6"/></g></svg>
<div class="a" style="left:1954.1000000000001px;top:1120.3px;width:56.6px;height:56.2px;background:#fff;border:2px solid #e3e3e3;border-radius:16px;box-sizing:border-box"></div>
<svg class="a" style="left:1964.4px;top:1130.6px" width="36" height="36" viewBox="0 0 36 36" ><g fill="none" stroke="#111" stroke-width="2.1"><path d="M6.4,12.9 V5.8 H13.6 M6.4,5.8 L14.6,14.2 M22.6,5.8 H29.8 V12.9 M29.8,5.8 L21.6,14.2 M6.4,22.1 V29.2 H13.6 M6.4,29.2 L14.6,20.8 M22.6,29.2 H29.8 V22.1 M29.8,29.2 L21.6,20.8"/></g></svg>
<div class="a" style="left:583.9px;top:1211.3px;width:16.2px;height:16.2px;background:#a198ea;border-radius:50%"></div>
<span class="t" id="t78" style="left:607.62px;top:1206px;font-size:29px;color:#2e2e2e;transform:scaleX(1.0755);">8f89a39d</span>
<span class="t" id="t79" style="left:745.62px;top:1206px;font-size:29px;color:#2e2e2e;font-weight:700;transform:scaleX(1.0391);">5</span>
<div class="a" style="left:643.9px;top:1271px;width:1364px;height:2px;background:#f3f3f3"></div>
<div class="a" style="left:643.9px;top:1401px;width:1364px;height:2px;background:#f3f3f3"></div>
<div class="a" style="left:643.9px;top:1531px;width:1364px;height:2px;background:#f3f3f3"></div>
<div class="a" style="left:643.9px;top:1661px;width:1364px;height:2px;background:#f3f3f3"></div>
<div class="a" style="left:642.9px;top:1272px;width:2px;height:521px;background:#d3d3d3"></div>
<div class="a" style="left:642.9px;top:1791px;width:1365px;height:2px;background:#d3d3d3"></div>
<span class="t" id="t80" style="left:600.55px;top:1271px;font-size:22.5px;color:#333;transform:scaleX(1.1030);">8</span>
<span class="t" id="t81" style="left:600.59px;top:1377px;font-size:22.5px;color:#333;transform:scaleX(1.1030);">6</span>
<span class="t" id="t82" style="left:601.71px;top:1507px;font-size:22.5px;color:#333;transform:scaleX(0.9268);">4</span>
<span class="t" id="t83" style="left:600.60px;top:1637px;font-size:22.5px;color:#333;transform:scaleX(1.1030);">2</span>
<span class="t" id="t84" style="left:882.20px;top:1800px;font-size:21.5px;color:#333;transform:scaleX(0.9728);">Jun 18, 01:45</span>
<span class="t" id="t85" style="left:1304.40px;top:1800px;font-size:21.5px;color:#333;transform:scaleX(0.9728);">Jun 18, 09:15</span>
<span class="t" id="t86" style="left:1735.00px;top:1800px;font-size:21.5px;color:#333;transform:scaleX(0.9929);">Jun 18, 20:30</span>
<span class="t" id="t87" style="left:1231.90px;top:1837px;font-size:24px;color:#454545;transform:scaleX(1.0290);">Time (UTC)</span>
<div class="a" style="left:1995.4px;top:1467px;width:10px;height:324px;background:#9b96e6;border-radius:5px 5px 0 0"></div>
<div class="a" style="left:2073.6px;top:1087.7px;width:1492.2px;height:812.1px;background:#fff;border:2px solid #e3e3e3;border-radius:17px;box-sizing:border-box"></div>
<span class="t" id="t88" style="left:2108.09px;top:1127px;font-size:32.5px;color:#2e2e2e;font-weight:700;transform:scaleX(0.9802);">Subrequests</span>
<div class="a" style="left:2108.7px;top:1171.7px;width:193.3px;height:2px;background:repeating-linear-gradient(90deg,#222 0 4px,transparent 4px 10px)"></div>
<div class="a" style="left:3270.6px;top:1122px;width:177px;height:51.5px;background:#f1f1f2;border:1px solid #e4e4e6;border-radius:17px;box-sizing:border-box;box-shadow:0 2px 4px rgba(0,0,0,.07)"></div>
<div class="a" style="left:3359.6px;top:1123px;width:87px;height:49.5px;background:#e9e9eb;border-radius:16px"></div>
<div class="a" style="left:3271.6px;top:1123px;width:88px;height:49.5px;background:#fff;border-radius:16px"></div>
<svg class="a" style="left:3296.6px;top:1130px" width="40" height="36" viewBox="0 0 40 36" ><g fill="none" stroke="#111" stroke-width="2" stroke-linecap="round" stroke-linejoin="round"><path d="M4.5,29.5 H33.5"/><path d="M7.2,29.5 V18.9 H14.5 V29.5 M14.5,18.9 V12 H22.4 V29.5 M22.4,12 V5.2 H30.6 V29.5"/></g></svg>
<svg class="a" style="left:3382.6px;top:1130px" width="40" height="36" viewBox="0 0 40 36" ><g fill="none" stroke="#111" stroke-width="2" stroke-linecap="round" stroke-linejoin="round"><path d="M5.5,6 V29.5 H33.2"/><path d="M5.5,21.8 L14.2,14.2 L23.4,21.8 L33.2,12.6"/></g></svg>
<div class="a" style="left:3477.7999999999997px;top:1120.3px;width:56.6px;height:56.2px;background:#fff;border:2px solid #e3e3e3;border-radius:16px;box-sizing:border-box"></div>
<svg class="a" style="left:3488.1px;top:1130.6px" width="36" height="36" viewBox="0 0 36 36" ><g fill="none" stroke="#111" stroke-width="2.1"><path d="M6.4,12.9 V5.8 H13.6 M6.4,5.8 L14.6,14.2 M22.6,5.8 H29.8 V12.9 M29.8,5.8 L21.6,14.2 M6.4,22.1 V29.2 H13.6 M6.4,29.2 L14.6,20.8 M22.6,29.2 H29.8 V22.1 M29.8,29.2 L21.6,20.8"/></g></svg>
<div class="a" style="left:2107.6px;top:1211.3px;width:16.2px;height:16.2px;background:#a198ea;border-radius:50%"></div>
<span class="t" id="t89" style="left:2131.81px;top:1206px;font-size:29px;color:#2e2e2e;transform:scaleX(0.9977);">Cached</span>
<span class="t" id="t90" style="left:2239.50px;top:1206px;font-size:29px;color:#2e2e2e;font-weight:700;transform:scaleX(1.1083);">0</span>
<div class="a" style="left:2304.4px;top:1211.3px;width:16.2px;height:16.2px;background:#eca25f;border-radius:50%"></div>
<span class="t" id="t91" style="left:2327.18px;top:1206px;font-size:29px;color:#2e2e2e;transform:scaleX(1.0082);">Uncached</span>
<span class="t" id="t92" style="left:2466.77px;top:1206px;font-size:29px;color:#2e2e2e;font-weight:700;transform:scaleX(1.1083);">0</span>
<div class="a" style="left:2167.6px;top:1271px;width:1364px;height:2px;background:#f3f3f3"></div>
<div class="a" style="left:2167.6px;top:1401px;width:1364px;height:2px;background:#f3f3f3"></div>
<div class="a" style="left:2167.6px;top:1531px;width:1364px;height:2px;background:#f3f3f3"></div>
<div class="a" style="left:2167.6px;top:1661px;width:1364px;height:2px;background:#f3f3f3"></div>
<div class="a" style="left:2166.6px;top:1272px;width:2px;height:521px;background:#d3d3d3"></div>
<div class="a" style="left:2166.6px;top:1791px;width:1365px;height:2px;background:#d3d3d3"></div>
<span class="t" id="t93" style="left:2125.80px;top:1271px;font-size:22.5px;color:#333;transform:scaleX(0.9268);">4</span>
<span class="t" id="t94" style="left:2124.65px;top:1377px;font-size:22.5px;color:#333;transform:scaleX(1.1030);">3</span>
<span class="t" id="t95" style="left:2124.67px;top:1507px;font-size:22.5px;color:#333;transform:scaleX(1.1030);">2</span>
<span class="t" id="t96" style="left:2124.73px;top:1637px;font-size:22.5px;color:#333;transform:scaleX(1.1030);">1</span>
<span class="t" id="t97" style="left:2784.70px;top:1800px;font-size:21.5px;color:#333;transform:scaleX(0.9974);">Jun 18, 06:00</span>
<span class="t" id="t98" style="left:3262.20px;top:1800px;font-size:21.5px;color:#333;transform:scaleX(0.9690);">Jun 18, 18:00</span>
<span class="t" id="t99" style="left:2756.00px;top:1837px;font-size:24px;color:#454545;transform:scaleX(1.0290);">Time (UTC)</span>
<div class="a" style="left:790px;top:1960px;width:2040px;height:80px;border-radius:40px;box-shadow:0 0 90px 40px rgba(0,0,0,.17)"></div>
<svg class="a" style="left:0px;top:1916px" width="10" height="10" viewBox="0 0 10 10" ><path d="M0,3 C1,6.5 3,9 6,10 H0 Z" fill="#8b2a48" stroke="#111" stroke-width="0.8"/></svg>
</div></body></html>
